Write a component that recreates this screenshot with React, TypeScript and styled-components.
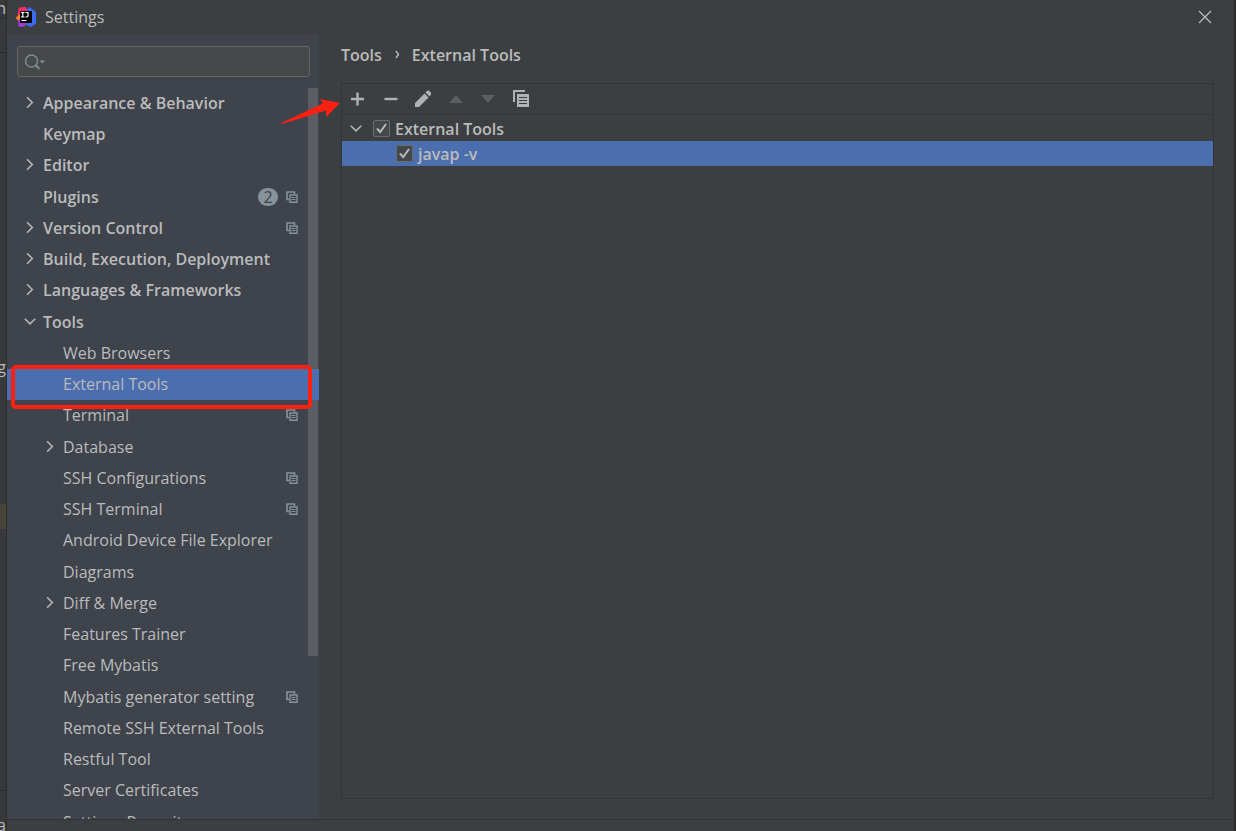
import React, { useState } from "react";
import styled, { createGlobalStyle, css } from "styled-components";

const color = {
  window: "#3c3f41",
  sidebar: "#3e434c",
  line: "#323537",
  text: "#bbbbbb",
  select: "#4b6eaf",
  mark: "#ff2012",
};

const GlobalStyle = createGlobalStyle`
  *, *::before, *::after { box-sizing: border-box; }
  body {
    margin: 0;
    background: ${color.window};
    color: ${color.text};
    font: 16px/20px "Open Sans", "Noto Sans", sans-serif;
  }
  button, input { font: inherit; color: inherit; }
  button { border: 0; padding: 0; background: none; }
`;

const Desktop = styled.div`
  display: grid;
  grid-template-columns: 7px minmax(0, 1fr) 2px;
  height: 100vh;
  overflow: hidden;
`;

const Editor = styled.div`
  display: flex;
  flex-direction: column;
  overflow: hidden;
  background: #37393b;
  border-right: 1px solid #2b2d2e;
`;

const EditorPane = styled.div<{ $height?: number; $align?: string }>`
  display: flex;
  flex-direction: column;
  align-items: flex-end;
  justify-content: ${(p) => p.$align ?? "flex-start"};
  flex: ${(p) => (p.$height ? `0 0 ${p.$height}px` : "1 1 0")};
  border-bottom: 1px solid #2b2b2b;
  overflow: hidden;
`;

const EditorBlock = styled.div`
  display: flex;
  flex-direction: column;
  align-items: flex-end;
  justify-content: flex-end;
  height: 324px;
`;

const Highlight = styled.div`
  align-self: stretch;
  height: 25px;
  margin-top: 127px;
  background: #49453c;
`;

const EditorText = styled.span`
  line-height: 20px;
`;

const EditorFoot = styled.div`
  display: flex;
  align-items: flex-end;
  justify-content: flex-end;
  height: 44px;
  margin-bottom: -4px;
`;

const EditorEdge = styled.div`
  background: #2b2b2b;
`;

const Dialog = styled.div`
  display: flex;
  flex-direction: column;
  min-width: 0;
  min-height: 0;
  background: ${color.window};
`;

const TitleBar = styled.header`
  display: flex;
  align-items: center;
  gap: 9px;
  height: 34px;
  padding: 0 19px 0 9px;
`;

const Title = styled.h1`
  flex: 1;
  margin: 0;
  font-size: 16px;
  font-weight: 400;
`;

const CloseButton = styled.button`
  display: grid;
  place-items: center;
  width: 20px;
  height: 20px;
`;

const Body = styled.div`
  display: flex;
  flex: 1;
  min-height: 0;
`;

const Sidebar = styled.aside`
  display: flex;
  flex-direction: column;
  flex: 0 0 312px;
  background: ${color.sidebar};
`;

const SearchBox = styled.label`
  display: flex;
  align-items: center;
  height: 31px;
  margin: 12px 9px 11px 10px;
  padding: 0 6px;
  background: #45494a;
  border: 1px solid #646464;
  border-radius: 3px;
`;

const SearchInput = styled.input`
  flex: 1;
  min-width: 0;
  border: 0;
  outline: 0;
  background: transparent;
`;

const TreeArea = styled.div`
  position: relative;
  flex: 1;
  min-height: 0;
  overflow: hidden;
`;

const ScrollThumb = styled.div`
  position: absolute;
  top: 0;
  right: 1px;
  width: 10px;
  height: calc(78% - 2px);
  background: rgba(166, 166, 166, 0.28);
`;

const TreeList = styled.ul`
  margin: 0;
  padding: 0;
  list-style: none;
`;

const TreeItem = styled.li<{ $marked?: boolean }>`
  height: 31px;
  &:nth-child(4n + 3) {
    margin-bottom: 1px;
  }
  ${(p) =>
    p.$marked &&
    css`
      position: relative;
      z-index: 1;
      &::after {
        content: "";
        position: absolute;
        inset: -4px 7px -9px 4px;
        border: 4px solid ${color.mark};
        border-radius: 5px;
        pointer-events: none;
      }
    `}
`;

const TreeButton = styled.button<{ $level: number; $selected?: boolean }>`
  display: flex;
  align-items: center;
  width: 100%;
  height: 100%;
  padding: 0 21px 2px ${(p) => (p.$level ? 36 : 16)}px;
  text-align: left;
  font-weight: ${(p) => (p.$level ? 400 : 600)};
  background: ${(p) => (p.$selected ? color.select : "transparent")};
`;

const Twisty = styled.span`
  display: grid;
  place-items: center;
  width: 14px;
  height: 14px;
  margin-right: 6px;
`;

const Label = styled.span`
  flex: 1;
  white-space: nowrap;
`;

const Count = styled.span`
  width: 20px;
  height: 18px;
  margin-right: 8px;
  border-radius: 9px;
  background: #87939a;
  color: ${color.sidebar};
  font-weight: 400;
  line-height: 18px;
  text-align: center;
`;

const Main = styled.main`
  display: flex;
  flex-direction: column;
  flex: 1;
  min-width: 0;
  padding: 11px 20px 20px 22px;
`;

const Breadcrumb = styled.nav`
  display: flex;
  align-items: center;
  gap: 11px;
  height: 20px;
  margin-bottom: 18px;
  font-weight: 600;
`;

const Crumb = styled.a`
  color: inherit;
  text-decoration: none;
`;

const Panel = styled.section`
  display: flex;
  flex-direction: column;
  flex: 1;
  border: 1px solid ${color.line};
`;

const Toolbar = styled.div`
  position: relative;
  display: flex;
  gap: 13px;
  height: 31px;
  padding: 5px;
  border-bottom: 1px solid ${color.line};
`;

const ToolButton = styled.button`
  display: grid;
  place-items: center;
  width: 20px;
  height: 20px;
`;

const Pointer = styled.svg`
  position: absolute;
  top: 13px;
  left: -62px;
  z-index: 2;
  pointer-events: none;
`;

const ToolList = styled.div`
  padding-top: 1px;
`;

const ToolRow = styled.div<{ $level: number; $selected?: boolean }>`
  display: flex;
  align-items: center;
  height: 25px;
  padding-left: ${(p) => (p.$level ? 54 : 7)}px;
  font-weight: 600;
  background: ${(p) => (p.$selected ? color.select : "transparent")};
`;

const FoldButton = styled.button`
  display: grid;
  place-items: center;
  width: 14px;
  height: 14px;
  margin-right: 10px;
`;

const CheckLabel = styled.label`
  display: flex;
  align-items: center;
  gap: 5px;
`;

const CheckFrame = styled.span`
  display: grid;
  place-items: center;
  > * {
    grid-area: 1 / 1;
  }
  svg {
    pointer-events: none;
  }
`;

const CheckInput = styled.input`
  appearance: none;
  width: 17px;
  height: 17px;
  margin: 0;
  border: 1px solid #6b6b6b;
  border-radius: 2px;
  background: #43494a;
  &:not(:checked) + svg {
    visibility: hidden;
  }
`;

const Footer = styled.footer`
  height: 12px;
  border-top: 1px solid ${color.line};
`;

const Chevron = ({ open }: { open?: boolean }) => (
  <svg width="14" height="14" viewBox="0 0 14 14" fill="none" stroke="#b4b6b8" strokeWidth="1.6" aria-hidden>
    <path d={open ? "M1.8 3.7 7 8.9l5.2-5.2" : "M4.1 1.300 9.300 6.500l-5.200 5.200"} />
  </svg>
);

const CopyMark = () => (
  <svg width="12" height="12" viewBox="0 0 12 12" fill="none" stroke="#87939a" aria-hidden>
    <path d="M3 8.500H1V1h7.500v2" strokeWidth="1.600" />
    <path d="M4 4h7v7.300H4z" strokeWidth="1.400" />
    <path d="M5.500 6.500h4M5.500 8.500h4" />
  </svg>
);

const Logo = () => (
  <svg width="20" height="20" viewBox="0 0 20 20" aria-hidden>
    <path d="M3 .5 10 0l2 4.500L10 10 1.500 8z" fill="#fe2d68" />
    <path d="M0 10.500 5 6v8l-4-1z" fill="#fc801d" />
    <path d="M2 12.500h9l-2 7-6.500.5z" fill="#a03bd0" />
    <path d="m10.500 3 3-3 6.500 5v11.500L15 20l-5-2L12 10z" fill="#3b6cf0" />
    <path d="M4 4h12v12H4z" fill="#000" />
    <path d="M5 5.500h3.500M6.800 5.500v4.500M5 10h3.500M9.500 5.500H12V9l-1 1H9.500M5.500 13.500h5" fill="none" stroke="#fff" strokeWidth="1.200" />
  </svg>
);

type Row = { label: string; level: number; open?: boolean; count?: number; copy?: boolean };

const rows: Row[] = [
  { label: "Appearance & Behavior", level: 0, open: false },
  { label: "Keymap", level: 0 },
  { label: "Editor", level: 0, open: false },
  { label: "Plugins", level: 0, count: 2, copy: true },
  { label: "Version Control", level: 0, open: false, copy: true },
  { label: "Build, Execution, Deployment", level: 0, open: false },
  { label: "Languages & Frameworks", level: 0, open: false },
  { label: "Tools", level: 0, open: true },
  { label: "Web Browsers", level: 1 },
  { label: "External Tools", level: 1 },
  { label: "Terminal", level: 1, copy: true },
  { label: "Database", level: 1, open: false },
  { label: "SSH Configurations", level: 1, copy: true },
  { label: "SSH Terminal", level: 1, copy: true },
  { label: "Android Device File Explorer", level: 1 },
  { label: "Diagrams", level: 1 },
  { label: "Diff & Merge", level: 1, open: false },
  { label: "Features Trainer", level: 1 },
  { label: "Free Mybatis", level: 1 },
  { label: "Mybatis generator setting", level: 1, copy: true },
  { label: "Remote SSH External Tools", level: 1 },
  { label: "Restful Tool", level: 1 },
  { label: "Server Certificates", level: 1 },
  { label: "Settings Repository", level: 1 },
];

const Check = ({ label }: { label: string }) => (
  <CheckLabel>
    <CheckFrame>
      <CheckInput type="checkbox" defaultChecked />
      <svg width="17" height="17" viewBox="0 0 17 17" fill="none" stroke="#b8b8b8" strokeWidth="2" aria-hidden>
        <path d="m4 8.500 3.200 3.700L13 4" />
      </svg>
    </CheckFrame>
    {label}
  </CheckLabel>
);

export default function App() {
  const [selected, setSelected] = useState("External Tools");

  return (
    <>
      <GlobalStyle />
      <Desktop>
        <Editor aria-hidden>
          <EditorPane $height={19} $align="flex-end">
            <EditorText>n</EditorText>
          </EditorPane>
          <EditorPane $height={34} />
          <EditorPane>
            <EditorBlock>
              <EditorText>g</EditorText>
            </EditorBlock>
            <Highlight />
          </EditorPane>
          <EditorFoot>
            <EditorText>a</EditorText>
          </EditorFoot>
        </Editor>

        <Dialog>
          <TitleBar>
            <Logo />
            <Title>Settings</Title>
            <CloseButton aria-label="Close">
              <svg width="14" height="14" viewBox="0 0 14 14" stroke="#bbb" strokeWidth="1.3" aria-hidden>
                <path d="m1 1 12 12M13 1 1 13" />
              </svg>
            </CloseButton>
          </TitleBar>

          <Body>
            <Sidebar>
              <SearchBox>
                <svg width="22" height="18" viewBox="0 0 22 18" fill="none" stroke="#7f8b91" strokeWidth="1.5" aria-hidden>
                  <circle cx="7.500" cy="8" r="6" />
                  <path d="m11.500 12 4 4" strokeWidth="2" />
                  <path d="M15.500 7.500h5.500l-2.700 3z" fill="#7f8b91" stroke="none" />
                </svg>
                <SearchInput type="text" aria-label="Search settings" />
              </SearchBox>
              <TreeArea>
                <TreeList>
                  {rows.map((r) => (
                    <TreeItem key={r.label} $marked={r.label === "External Tools"}>
                      <TreeButton
                        $level={r.level}
                        $selected={r.label === selected}
                        aria-expanded={r.open}
                        onClick={() => setSelected(r.label)}
                      >
                        <Twisty>{r.open !== undefined && <Chevron open={r.open} />}</Twisty>
                        <Label>{r.label}</Label>
                        {r.count && <Count>{r.count}</Count>}
                        {r.copy && <CopyMark />}
                      </TreeButton>
                    </TreeItem>
                  ))}
                </TreeList>
                <ScrollThumb />
              </TreeArea>
            </Sidebar>

            <Main>
              <Breadcrumb aria-label="Breadcrumb">
                <Crumb href="#tools">Tools</Crumb>
                <svg width="8" height="12" viewBox="0 0 8 12" fill="none" stroke="#bbb" strokeWidth="1.4" aria-hidden>
                  <path d="M3 2 5.500 5.500 3 9" />
                </svg>
                <Crumb href="#external-tools">External Tools</Crumb>
              </Breadcrumb>
              <Panel>
                <Toolbar>
                  <Pointer width="62" height="28" viewBox="0 0 62 28" aria-hidden>
                    <path d="M1 26 43 6.500 40 2l20 4-14 14v-6.500L2 27z" fill={color.mark} />
                  </Pointer>
                  <ToolButton aria-label="Add">
                    <svg width="16" height="16" viewBox="0 0 16 16" stroke="#afb1b3" strokeWidth="2.4" aria-hidden>
                      <path d="M8.500 1.500v13M2 8h13" />
                    </svg>
                  </ToolButton>
                  <ToolButton aria-label="Remove">
                    <svg width="16" height="16" viewBox="0 0 16 16" stroke="#afb1b3" strokeWidth="2.4" aria-hidden>
                      <path d="M2.500 8h13" />
                    </svg>
                  </ToolButton>
                  <ToolButton aria-label="Edit">
                    <svg width="18" height="18" viewBox="0 0 18 18" fill="#afb1b3" aria-hidden>
                      <path d="M1 17v-4L10.500 3.500l4 4L5 17zM11.500 2.500 13 1q1.500-1 3 .5t1 3l-1.500 2z" />
                    </svg>
                  </ToolButton>
                  <ToolButton aria-label="Move up" disabled>
                    <svg width="16" height="16" viewBox="0 0 16 16" fill="#5c5e60" aria-hidden>
                      <path d="M1 12h14L8 4z" />
                    </svg>
                  </ToolButton>
                  <ToolButton aria-label="Move down" disabled>
                    <svg width="16" height="16" viewBox="0 0 16 16" fill="#5c5e60" aria-hidden>
                      <path d="M0 4h14l-7 8z" />
                    </svg>
                  </ToolButton>
                  <ToolButton aria-label="Copy">
                    <svg width="18" height="18" viewBox="0 0 18 18" aria-hidden>
                      <path d="M1 12V1h11" fill="none" stroke="#afb1b3" strokeWidth="2" />
                      <path d="M4 4h12v13H4z" fill="#afb1b3" />
                      <path d="M6 7.500h8M6 10.500h8M6 13.500h8" stroke="#3c3f41" />
                    </svg>
                  </ToolButton>
                </Toolbar>
                <ToolList>
                  <ToolRow $level={0}>
                    <FoldButton aria-label="Collapse External Tools">
                      <Chevron open />
                    </FoldButton>
                    <Check label="External Tools" />
                  </ToolRow>
                  <ToolRow $level={1} $selected>
                    <Check label="javap -v" />
                  </ToolRow>
                </ToolList>
              </Panel>
            </Main>
          </Body>
          <Footer />
        </Dialog>
        <EditorEdge />
      </Desktop>
    </>
  );
}
